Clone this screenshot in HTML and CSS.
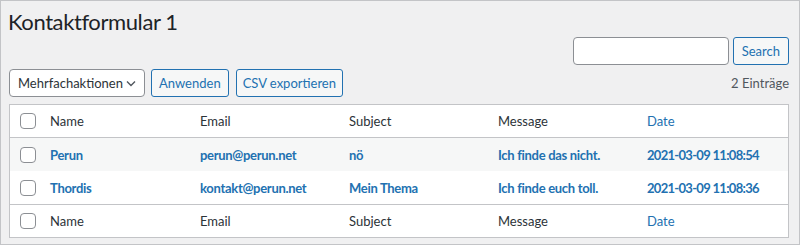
FILE: index.html
```html
<!DOCTYPE html>
<html lang="de">
  <head>
    <meta charset="UTF-8" />
    <title>Kontaktformular 1</title>
    <link rel="stylesheet" href="styles.css">
  </head>
  <body>
    <div class="wrap">
      <h1 class="page-title">Kontaktformular 1</h1>

      <!-- Search -->
      <div class="search-box">
        <input type="search" class="search-input" />
        <button class="button">Search</button>
      </div>

      <!-- Bulk actions -->
      <div class="tablenav">
        <div class="actions">
          <div class="select">
            <span>Mehrfachaktionen</span>
            <svg width="12" height="12" viewBox="0 0 12 12"><path d="M2 4.5l4 4 4-4" fill="none" stroke="#50575e" stroke-width="1.4"/></svg>
          </div>
          <button class="button">Anwenden</button>
          <button class="button csv">CSV exportieren</button>
        </div>
        <span class="count">2 Einträge</span>
      </div>

      <div class="list-table">
        <div class="row head">
          <div class="cb"><span class="check"></span></div>
          <div>Name</div>
          <div>Email</div>
          <div>Subject</div>
          <div>Message</div>
          <div class="link">Date</div>
        </div>
        <div class="row item alt">
          <div class="cb"><span class="check"></span></div>
          <div>Perun</div>
          <div>perun@perun.net</div>
          <div>nö</div>
          <div>Ich finde das nicht.</div>
          <div class="date">2021-03-09 11:08:54</div>
        </div>
        <div class="row item">
          <div class="cb"><span class="check"></span></div>
          <div>Thordis</div>
          <div>kontakt@perun.net</div>
          <div>Mein Thema</div>
          <div>Ich finde euch toll.</div>
          <div class="date">2021-03-09 11:08:36</div>
        </div>
        <div class="row foot">
          <div class="cb"><span class="check"></span></div>
          <div>Name</div>
          <div>Email</div>
          <div>Subject</div>
          <div>Message</div>
          <div class="link">Date</div>
        </div>
      </div>
    </div>
  </body>
</html>
```

FILE: styles.css
```css
/* Page frame */
body {
  margin: 0;
  font-family: Lato, "Noto Sans", sans-serif;
  font-size: 13px;
  color: #3c434a;
}

.wrap {
  box-sizing: border-box;
  width: 800px;
  height: 245px;
  border: 1px solid #c3c4c7;
  background-color: #f0f0f1;
  padding: 0 10px 0 7px;
}

.page-title {
  margin: 0;
  padding-top: 6px;
  font-size: 22px;
  font-weight: 400;
  line-height: 29px;
  letter-spacing: -0.4px;
  color: #1d2327;
}

.search-box {
  display: flex;
  justify-content: flex-end;
  gap: 4px;
  margin-top: 1px;
}

.search-input {
  box-sizing: border-box;
  width: 156px;
  height: 28px;
  margin: 0;
  border: 1px solid #8c8f94;
  border-radius: 4px;
  background: #fff;
}

.button {
  box-sizing: border-box;
  height: 28px;
  padding: 0 7px;
  margin: 0;
  border: 1px solid #2271b1;
  border-radius: 3px;
  background-color: #f6f7f7;
  color: #2271b1;
  font-family: inherit;
  font-size: 13px;
}

.search-box .button {
  padding: 0 8px;
}

.tablenav {
  display: flex;
  justify-content: space-between;
  align-items: center;
  margin-top: 4px;
  padding-left: 1px;
}

.actions {
  display: flex;
  gap: 6px;
}

.actions .csv {
  margin-left: 1px;
  padding: 0 6px;
}

.select {
  box-sizing: border-box;
  display: flex;
  align-items: center;
  justify-content: space-between;
  width: 136px;
  height: 28px;
  padding: 0 7px 0 8px;
  border: 1px solid #8c8f94;
  border-radius: 4px;
  background: #fff;
  color: #2c3338;
}

.count {
  color: #50575e;
}

/* Table */
.list-table {
  margin-top: 7px;
  margin-left: 1px;
  border: 1px solid #c3c4c7;
  background: #fff;
}

.row {
  display: grid;
  grid-template-columns: 30px 150px 149px 149px 149px 1fr;
  align-items: center;
  height: 33px;
}

.row > div {
  padding-left: 10px;
}

.row > .cb {
  padding-left: 10px;
  display: flex;
}

.head {
  height: 32px;
  border-bottom: 1px solid #c3c4c7;
  color: #2c3338;
}

.foot {
  height: 32px;
  border-top: 1px solid #c3c4c7;
  color: #2c3338;
}

.item {
  color: #2271b1;
  font-weight: 700;
  letter-spacing: -0.3px;
}

.alt {
  background-color: #f6f7f7;
}

.link {
  color: #2271b1;
}

.item .date {
  letter-spacing: -0.7px;
}

.check {
  box-sizing: border-box;
  display: block;
  width: 16px;
  height: 16px;
  border: 1px solid #8c8f94;
  border-radius: 4px;
  background: #fff;
}
```
